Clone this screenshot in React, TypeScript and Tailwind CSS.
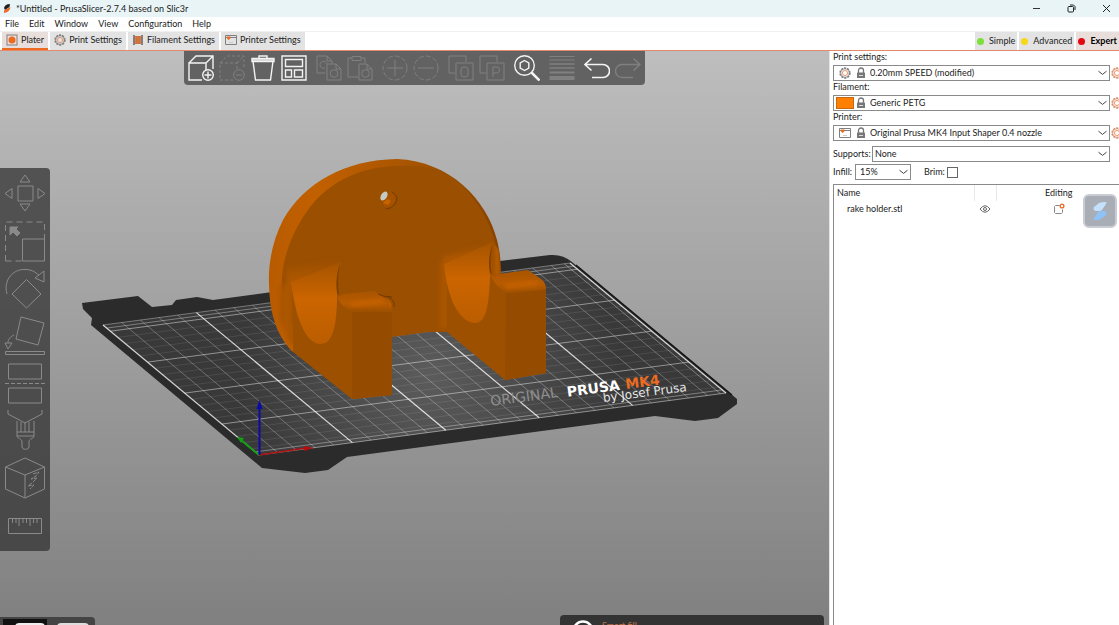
import React, { useState } from 'react'

const TABS = ['Plater', 'Print Settings', 'Filament Settings', 'Printer Settings']
const MENUS = ['File', 'Edit', 'Window', 'View', 'Configuration', 'Help']
const MODES = [
    { name: 'Simple', dot: 'bg-[#7be03a]' },
    { name: 'Advanced', dot: 'bg-[#f7d716]' },
    { name: 'Expert', dot: 'bg-[#e30613]' },
]

function CogIcon({ ring = '#808080' }: { ring?: string }) {
    return (
        <svg width="12" height="12" viewBox="0 0 16 16" fill="none">
            <circle cx="8" cy="8" r="6.500" stroke={ring} strokeWidth="2.200" strokeDasharray="2.800 1.280" />
            <circle cx="8" cy="8" r="5.600" stroke={ring} strokeWidth="1" />
            <circle cx="8" cy="8" r="3.400" stroke="#ed8b5b" strokeWidth="1.200" />
        </svg>
    )
}

function PlaterIcon() {
    return (
        <svg width="12" height="12" viewBox="0 0 12 12" fill="none">
            <rect x="1" y="1" width="10" height="10" stroke="#808080" />
            <circle cx="6" cy="6" r="3.500" fill="#ed6b21" />
        </svg>
    )
}

function SpoolIcon() {
    return (
        <svg width="12" height="12" viewBox="0 0 12 12">
            <path d="M1 1h2v10H1zM9 1h2v10H9z" fill="#808080" />
            <path d="M3 2h6v8H3z" fill="#e0763a" />
            <path d="M4.500 2v8M6 2v8M7.500 2v8" stroke="#b96b43" strokeWidth=".5" />
        </svg>
    )
}

function PrinterIcon() {
    return (
        <svg width="12" height="12" viewBox="0 0 12 12" fill="none">
            <path d="M.5 1.500h11v9H.5zM.5 3.500h11" stroke="#808080" />
            <path d="M2 2.500h3.400v2L3.700 6 2 4.500z" fill="#ed6b21" />
            <path d="M4 8.500h4" stroke="#ccc" />
        </svg>
    )
}

function LockIcon() {
    return (
        <svg width="10" height="12" viewBox="0 0 10 12" fill="none">
            <path d="M2.500 6V3.300a2.500 2.300 0 0 1 5 0V6" stroke="#777" strokeWidth="1.300" />
            <rect x="1" y="5.500" width="8" height="5.500" rx=".6" fill="#777" />
            <path d="M3 8.500h4" stroke="#ddd" />
        </svg>
    )
}

function Chevron() {
    return (
        <svg className="pointer-events-none absolute right-[3px]" width="9" height="6" viewBox="0 0 9 6" fill="none">
            <path d="M.5 1.200l4 3.200 4-3.200" stroke="#444" strokeWidth="1" />
        </svg>
    )
}

const TAB_ICONS = [<PlaterIcon />, <CogIcon />, <SpoolIcon />, <PrinterIcon />]

function Tool({ label, off, children }: { label: string, off?: boolean, children: React.ReactNode }) {
    return (
        <button type="button" aria-label={label} className={off ? 'text-[#808080]' : 'text-[#f4f4f4]'}>
            <svg width="26" height="26" viewBox="0 0 26 26" fill="none" stroke="currentColor" strokeWidth={off ? 1 : 1.400}>
                {children}
            </svg>
        </button>
    )
}

function TopToolbar() {
    return (
        <div className="flex gap-[9px] rounded-b-sm bg-[#626262] px-1 py-1">
            <div className="flex gap-[5px]">
                <Tool label="Add">
                    <path d="M14 25H1V8h17v7M1 8l7-7h17v13M18 8l7-7" />
                    <circle cx="20" cy="20" r="5.300" />
                    <path d="M16.500 20h7M20 16.500v7" />
                </Tool>
                <Tool label="Delete" off>
                    <path d="M14 25H1V8h17v7M1 8l7-7h17v13M18 8l7-7" strokeDasharray="3 2" />
                    <circle cx="20" cy="20" r="5.300" />
                    <path d="M17 20h6" />
                </Tool>
                <Tool label="Delete all">
                    <path d="M3 6l2.500 19h15L23 6" />
                    <path d="M2 3.500h22v3H2z" fill="#d5d5d5" />
                    <path d="M9 3V1h8v2" />
                </Tool>
                <Tool label="Arrange">
                    <path d="M1 1h24v24H1zM4.500 4.500h17v7h-17zM4.500 15h6v7h-6zM13.500 15h8v7h-8z" />
                </Tool>
            </div>
            <div className="flex gap-[5px]">
                <Tool label="Copy" off>
                    <path d="M9 18H1V1h10l5 5v3M11 1v5h5M11 9h9l5 5v11H11zM20 9v5h5" />
                    <circle cx="18" cy="18.500" r="3.800" />
                    <path d="M9 13a3.500 3.500 0 1 1 2-4" />
                </Tool>
                <Tool label="Paste" off>
                    <path d="M11 22H1V3h4M14 3h4v5M5 1.500h9v4H5zM12 9h8l5 5v11H12zM20 9v5h5" />
                    <circle cx="18.500" cy="18.500" r="3.800" />
                </Tool>
            </div>
            <div className="flex gap-[5px]">
                <Tool label="Add instance" off>
                    <circle cx="13" cy="13" r="12" strokeDasharray="5 2" />
                    <path d="M5 13h16M13 5v16" />
                </Tool>
                <Tool label="Remove instance" off>
                    <circle cx="13" cy="13" r="12" strokeDasharray="5 2" />
                    <path d="M5 13h16" />
                </Tool>
            </div>
            <div className="flex gap-[5px]">
                <Tool label="Split to objects" off>
                    <path d="M7 18H1V1h17v6M8 8h17v17H8z" />
                    <rect x="13" y="12" width="7" height="10" rx="3" />
                </Tool>
                <Tool label="Split to parts" off>
                    <path d="M7 18H1V1h17v6M8 8h17v17H8zM14 22V12h3.500a3 3 0 0 1 0 6H14" />
                </Tool>
            </div>
            <Tool label="Search">
                <circle cx="10.500" cy="10.500" r="9.800" />
                <path d="M10.500 5.500l4.300 2.500v5l-4.300 2.500L6.200 13V8z" />
                <path d="M17.500 17.500l8 8" strokeWidth="2.500" />
            </Tool>
            <Tool label="Variable layer height" off>
                <path d="M.5 1.500h25M.5 5h25" strokeWidth="1" />
                <path d="M.5 9h25M.5 13h25" strokeWidth="1.500" />
                <path d="M.5 17.500h25" strokeWidth="2" />
                <path d="M.5 23h25" strokeWidth="4" />
            </Tool>
            <div className="flex gap-[5px]">
                <Tool label="Undo">
                    <path d="M7.500 3.500L1 9.500l6.500 6M1 9.500h18a6.500 6.500 0 0 1 0 13H8" strokeWidth="1.600" />
                </Tool>
                <Tool label="Redo" off>
                    <path d="M18.500 3.500L25 9.500l-6.500 6M25 9.500H7a6.500 6.500 0 0 0 0 13h11" strokeWidth="1.300" />
                </Tool>
            </div>
        </div>
    )
}

const GIZMOS = [
    { name: 'Move', d: 'M13 11h15v15H13zM20 0l5 7H15zM20 36l5-7H15zM0 18.500l7-5v10zM40 18.500l-7-5v10z' },
    { name: 'Scale', d: 'M17.500 17h22v22h-22z' },
    { name: 'Rotate', d: 'M21.500 10.500l14.500 14.500-14.500 14L7 25zM2 25C-2 11 8 0 20 .500c6 0 10 2 14 6M39 2v11l-9-4z' },
    { name: 'Place on face', d: 'M16 1l23 6-6 22-22-6zM9 19c-4 2-6 4-6 8M0 27h7l-4 6zM.5 35.500h39v3H.5z' },
    { name: 'Cut', d: 'M3.500 1h33v15h-33zM3.500 25h33v15h-33z' },
    { name: 'Paint-on supports', d: 'M3 0v4l17 9 17-9V0M12 11v15h17V11M16 12v10M20 12v10M24 12v10M12 22h17M12 26c0 3 5 2 5 6v5c0 3 7 3 7 0v-5c0-4 5-3 5-6' },
    { name: 'Seam painting', d: 'M20 1l19.500 9v22L20 41 .5 32V10zM.5 10L20 18l19.500-8M20 18v23' },
    { name: 'Measure', d: 'M3.500 14.500h33v15h-33zM7.500 15v4M11 15v4M14 15v7M18 15v4M21.500 15v4M25 15v7M28.500 15v4M32 15v4' },
]

function GizmoBar() {
    return (
        <div className="flex flex-col gap-[7px] rounded-r-sm bg-[#333]/75 px-[5px] py-[7px]">
            {GIZMOS.map((gizmo) => (
                <button key={gizmo.name} type="button" aria-label={gizmo.name} className="text-[#8a8a8a]">
                    <svg width="40" height="40" viewBox="0 0 40 40" fill="none" stroke="currentColor" className="overflow-visible">
                        <path d={gizmo.d} />
                        {gizmo.name === 'Scale' && <>
                            <path d="M.5 39V0h39V17M.5 39H17" strokeDasharray="6 4" />
                            <path d="M5 5h8l-2 2 4 4-3 3-4-4-3 3z" fill="currentColor" />
                        </>}
                        {gizmo.name === 'Cut' && <path d="M0 20.500h40" strokeDasharray="4 2" />}
                        {gizmo.name === 'Seam painting' && <path d="M28 17l6-2-3 4-5 3 6-1-5 5-4 3 6-1-4 4" strokeDasharray="4 1" />}
                    </svg>
                </button>
            ))}
        </div>
    )
}

// every 10 mm, the bed is 250 x 210 mm
const COLS = Array.from({ length: 26 }, (_, i) => i * 10)
const ROWS = Array.from({ length: 21 }, (_, i) => i * 10)

function Bed() {
    return (
        <g>
            <path fill="#2b2b2b" d="M82 303l56-7 14 11 20-2 4-5 21-3 16 3 287-39 50-6q13-1 22 7l165 137v5l-19 14-23 3-40-5-308 41-19 13-23 3-43-5L91 325l1-7-9-9z" />
            <path fill="url(#bed)" d="M103 325l468-62 155 130-467 62z" />
            <g transform="matrix(1.868 -.248 -.743 -.619 259 455)">
                {ROWS.map((y) => (
                    <path key={y} d={`M0 ${y}H250`} stroke="#fff" vectorEffect="non-scaling-stroke"
                        strokeOpacity={y % 50 === 0 ? 0.45 : 0.09} strokeWidth="1" />
                ))}
                {COLS.map((x) => (
                    <path key={x} d={`M${x} 0V210`} stroke="#fff" vectorEffect="non-scaling-stroke"
                        strokeOpacity={x % 50 === 0 ? 0.8 : 0.27} strokeWidth={x % 50 === 0 ? 1.200 : 1} />
                ))}
                <path d="M0 210H250M0 205H250M0 5H250M247 0V210" stroke="#fff" strokeOpacity=".35" vectorEffect="non-scaling-stroke" />
            </g>
            <path d="M576 265l156 130" stroke="#111" strokeWidth="1.200" />
            <g transform="rotate(-7.600 491 406)" fontFamily="DejaVu Sans" fontSize="14">
                <text x="491" y="406" fill="#8f8f8f">ORIGINAL</text>
                <text x="568" y="407" fill="#fff" fontWeight="bold">PRUSA</text>
                <text x="627" y="407" fill="#ed6b21" fontWeight="bold">MK4</text>
                <text x="603" y="417" fill="#e6e6e6" fontSize="12">by Josef Prusa</text>
            </g>
        </g>
    )
}

function Model() {
    return (
        <g>
            <path fill="url(#rim)" d="M269 285C268 262 273 240 283 220C305 182 345 160 397 159C450 161 487 200 497 240C500 252 501 262 501 275L480 332H300L293 352C281 340 270 322 269 285z" />
            <path fill="#9b4f00" d="M282 290C280 262 292 228 315 201C340 175 370 166 400 166C420 165 436 168 450 176C478 195 500 235 500 275L475 330L447 332L435 331L392 337L380 350H300z" />
            <g filter="url(#soft)">
                <path fill="url(#blendL)" d="M287 268l52-8-5 40-47 22z" />
                <path fill="url(#blendR)" d="M443 256l48-13 2 40-50 26z" />
                <path fill="url(#fillet)" d="M281 285h12v62q-10-14-13-30z" />
                <path fill="url(#sideV)" d="M438 262h11v67l-11-1z" />
            </g>
            <path fill="#9d5000" d="M292 283l45 10h28l27 18v84l-40 4-59-47z" />
            <path fill="#9d5000" d="M447 262l45 15h36l14 5q4 3 4 8v83l-41 7-58-48z" />
            <path fill="#964c00" d="M352 312h40v83l-40 4zM506 293l40-3v83l-41 7z" />
            <path fill="url(#scoop)" d="M291 282L341 262Q335 275 337 290Q338 344 321 344C306 344 296 320 291 282z" />
            <path fill="url(#scoop)" d="M444 264L493 242Q488 259 490 276C489 310 485 323 475 323C458 322 447 296 444 264z" />
            <path fill="#7e4000" d="M340 264q-5 14-3 29l2 2q-2-17 1-31zM493 243q-6 15-3 30l2 2q-3-15 1-32z" />
            <path fill="url(#sideR)" d="M493 243l6 7 2 24-8 1q-3-14 0-32z" />
            <path fill="url(#peg)" d="M337 297l8-3 28-3q6 2 14 9 5 3 5 11l-36 1-6-1q-9-5-13-14z" />
            <path fill="url(#peg)" d="M491 277l8-3 29-4 10 7q8 4 8 12l-34 4-7-1q-9-6-14-15z" />
            <g filter="url(#soft)">
                <path d="M351 305l32-4M505 287l32-4" stroke="#c86300" strokeWidth="4" />
            </g>
            <path d="M378 294q5 3 14 3" stroke="#6f3900" fill="none" />
            <path d="M388 297q7 3 6 10" stroke="#743a00" fill="none" />
            <path d="M387 299q5 3 4 8" stroke="#c36000" fill="none" />
            <ellipse cx="389" cy="200" rx="6" ry="8" fill="#a45200" transform="rotate(25 389 200)" />
            <path d="M392 192q8 5 3 12-4 5-9 5" stroke="#743a00" fill="none" />
            <ellipse cx="384" cy="196" rx="3" ry="5" fill="#c4cbc4" transform="rotate(30 384 196)" />
            <path d="M387 199l4 2-3 4-5-2z" fill="#c86300" />
        </g>
    )
}

function Scene() {
    return (
        <svg className="absolute inset-0 h-full w-full" viewBox="0 51 829 574" preserveAspectRatio="xMidYMid slice" role="img" aria-label="3D view">
            <defs>
                <filter id="soft"><feGaussianBlur stdDeviation="2" /></filter>
                <radialGradient id="bed" gradientUnits="userSpaceOnUse" cx="430" cy="375" r="190">
                    <stop offset="0" stopColor="#5c5c5c" />
                    <stop offset="1" stopColor="#393939" />
                </radialGradient>
                <linearGradient id="rim" x1="0" y1="0" x2="1" y2="0">
                    <stop offset="0" stopColor="#b85b00" />
                    <stop offset=".2" stopColor="#c26000" />
                    <stop offset=".6" stopColor="#a85500" />
                    <stop offset="1" stopColor="#864300" />
                </linearGradient>
                <linearGradient id="fillet" x1="0" y1="0" x2="1" y2="0">
                    <stop offset="0" stopColor="#9b4f00" />
                    <stop offset=".5" stopColor="#b35900" />
                    <stop offset="1" stopColor="#9d5000" />
                </linearGradient>
                <linearGradient id="sideR" x1="0" y1="0" x2="1" y2="0">
                    <stop offset="0" stopColor="#9b4f00" />
                    <stop offset=".6" stopColor="#b45a00" />
                    <stop offset="1" stopColor="#9d5000" />
                </linearGradient>
                <linearGradient id="sideV" x1="0" y1="0" x2="1" y2="0">
                    <stop offset="0" stopColor="#9b4f00" />
                    <stop offset=".5" stopColor="#ae5700" />
                    <stop offset="1" stopColor="#9d5000" />
                </linearGradient>
                <linearGradient id="blendL" x1="0" y1="0" x2="0" y2="1">
                    <stop offset="0" stopColor="#9b4f00" />
                    <stop offset=".5" stopColor="#b85b00" />
                    <stop offset="1" stopColor="#a85400" />
                </linearGradient>
                <linearGradient id="blendR" x1="0" y1="0" x2="0" y2="1">
                    <stop offset="0" stopColor="#9b4f00" />
                    <stop offset=".4" stopColor="#b85b00" />
                    <stop offset="1" stopColor="#9d5000" />
                </linearGradient>
                <linearGradient id="scoop" x1="0" y1="0" x2="0" y2="1">
                    <stop offset="0" stopColor="#a55300" />
                    <stop offset=".45" stopColor="#cb6500" />
                    <stop offset="1" stopColor="#bb5d00" />
                </linearGradient>
                <linearGradient id="peg" x1="0" y1="0" x2="0" y2="1">
                    <stop offset="0" stopColor="#a85400" />
                    <stop offset=".6" stopColor="#b85b00" />
                    <stop offset="1" stopColor="#9b4f00" />
                </linearGradient>
            </defs>
            <Bed />
            <Model />
            <path d="M259 455l47-7" stroke="#b01010" strokeWidth="1.500" />
            <path d="M304 446l10 2-10 3z" fill="#b01010" />
            <path d="M259 455l-18-15" stroke="#12a012" strokeWidth="1.800" />
            <path d="M237 437l7 1-3 5z" fill="#12a012" />
            <path d="M259.500 455v-48" stroke="#0a0aa8" strokeWidth="2" />
            <path d="M259.500 400l3 9h-6z" fill="#0a0aa8" />
        </svg>
    )
}

function PresetRow({ id, label, value, icon }: { id: string, label: string, value: string, icon: React.ReactNode }) {
    return (
        <div>
            <label htmlFor={id} className="block h-[14px]">{label}</label>
            <div className="flex items-center gap-px">
                <div className="relative flex w-[277px] shrink-0 items-center">
                    <select id={id} className="h-4 w-full appearance-none border border-[#8a8a8a] bg-white pl-[36px] leading-[14px]">
                        <option>{value}</option>
                    </select>
                    <span className="pointer-events-none absolute left-[2px] flex w-[31px] items-center justify-between">
                        <span className="flex w-[19px] justify-center">{icon}</span>
                        <LockIcon />
                    </span>
                    <Chevron />
                </div>
                <button type="button" aria-label={'Edit ' + label} className="shrink-0"><CogIcon ring="#d8936f" /></button>
            </div>
        </div>
    )
}

function Sidebar() {
    const [brim, setBrim] = useState(false)

    return (
        <aside className="relative flex w-[290px] shrink-0 flex-col overflow-hidden border-l border-[#e4e4e4] bg-white pl-[3px]">
            <PresetRow id="print" label="Print settings:" value="0.20mm SPEED (modified)" icon={<CogIcon />} />
            <PresetRow id="filament" label="Filament:" value="Generic PETG"
                icon={<span className="h-3 w-[18px] border border-[#c56a10] bg-[#ff8000]" />} />
            <PresetRow id="printer" label="Printer:" value="Original Prusa MK4 Input Shaper 0.4 nozzle" icon={<PrinterIcon />} />
            <div className="mt-[5px] flex w-[277px] items-center justify-between">
                <label htmlFor="supports">Supports:</label>
                <div className="relative flex w-[238px] items-center">
                    <select id="supports" className="h-4 w-full appearance-none border border-[#8a8a8a] bg-white pl-[2px] leading-[14px]">
                        <option>None</option>
                    </select>
                    <Chevron />
                </div>
            </div>
            <div className="mt-[2px] flex items-center">
                <label htmlFor="infill" className="w-[22px]">Infill:</label>
                <div className="relative flex w-[56px] items-center">
                    <select id="infill" className="h-4 w-full appearance-none border border-[#8a8a8a] bg-white pl-1 leading-[14px]">
                        <option>15%</option>
                    </select>
                    <Chevron />
                </div>
                <label htmlFor="brim" className="ml-[13px] w-[23px]">Brim:</label>
                <input id="brim" type="checkbox" checked={brim} onChange={() => setBrim(!brim)}
                    className="h-[11px] w-[11px] appearance-none border border-[#666] bg-white checked:bg-[#ed6b21]" />
            </div>
            <div className="mt-1 grow border-l border-t border-[#8a8a8a]">
                <table className="w-full table-fixed border-collapse text-left">
                    <thead>
                        <tr className="h-4">
                            <th className="w-[140px] pl-[3px] font-normal">Name</th>
                            <th className="w-[22px] border-x border-[#e8e8e8]" aria-label="Visible" />
                            <th className="pl-[2px] text-center font-normal">Editing</th>
                        </tr>
                    </thead>
                    <tbody>
                        <tr className="h-4">
                            <td className="pl-[13px]">rake holder.stl</td>
                            <td>
                                <svg className="mx-auto" width="12" height="10" viewBox="0 0 12 10" fill="none" stroke="#666">
                                    <path d="M1 5q5-6.500 10 0-5 6.500-10 0z" />
                                    <circle cx="6" cy="5" r="1.500" />
                                </svg>
                            </td>
                            <td className="pl-[2px]">
                                <svg className="mx-auto" width="12" height="12" viewBox="0 0 12 12" fill="none">
                                    <path d="M6.500 2.500h-4l-1 1v6l1 1h6l1-1V6.500" stroke="#888" />
                                    <circle cx="9" cy="3" r="1.900" stroke="#ed6b21" strokeWidth="1.300" />
                                </svg>
                            </td>
                        </tr>
                    </tbody>
                </table>
            </div>
            <button type="button" aria-label="Assistant"
                className="absolute right-[2px] top-[143px] flex h-[34px] w-[34px] items-center justify-center rounded-md border-2 border-[#c9ccd3] bg-[#a9adb6]">
                <svg width="20" height="22" viewBox="0 0 20 22">
                    <path d="M4 10q-1-1 0-3l5-4q2-1 7-1 1 0 0 2l-4 6q-1 1-3 1H6q-1 0-2-1z" fill="#c4e0fa" />
                    <path d="M16 12q1 1 0 3l-5 4q-2 1-7 1-1 0 0-2l4-6q1-1 3-1h3q1 0 2 1z" fill="#8fc3f5" />
                </svg>
            </button>
        </aside>
    )
}

function App() {
    const [tab, setTab] = useState('Plater')

    return (
        <div className="flex h-screen flex-col overflow-hidden bg-white font-[Lato,'Noto_Sans',sans-serif] text-[9px] leading-[12px] text-[#222]">
            <header className="flex h-[17px] shrink-0 items-center justify-between bg-[#e8f4f6] pl-[3px] pr-2">
                <div className="flex items-center gap-[5px]">
                    <svg width="8" height="9" viewBox="0 0 8 9">
                        <path d="M1 4Q2 0 7 0l-.5 3L2 6z" fill="#222" />
                        <path d="M7.500 3Q7 8 1 9V6.500z" fill="#ed6b21" />
                    </svg>
                    <h1>*Untitled - PrusaSlicer-2.7.4 based on Slic3r</h1>
                </div>
                <div className="flex gap-[26px]">
                    <button type="button" aria-label="Minimize">
                        <svg width="9" height="9" viewBox="0 0 9 9"><path d="M1 4.500h7" stroke="#333" /></svg>
                    </button>
                    <button type="button" aria-label="Restore">
                        <svg width="9" height="9" viewBox="0 0 9 9" fill="none" stroke="#222">
                            <rect x="1" y="2.500" width="5.500" height="5.500" rx="1" />
                            <path d="M3 1h3.500L8 2.500V6" />
                        </svg>
                    </button>
                    <button type="button" aria-label="Close">
                        <svg width="9" height="9" viewBox="0 0 9 9"><path d="M1 1l7 7M8 1L1 8" stroke="#222" /></svg>
                    </button>
                </div>
            </header>
            <nav className="flex h-[15px] shrink-0 items-center gap-[10px] border-b border-[#f0f0f0] px-[5px]">
                {MENUS.map((menu) => <button key={menu} type="button">{menu}</button>)}
            </nav>
            <div className="flex h-[19px] shrink-0 justify-between border-b border-[#e58a68] pl-[2px]">
                <div className="flex gap-[2px]">
                    {TABS.map((name, i) => (
                        <button key={name} type="button" onClick={() => setTab(name)}
                            className={`flex items-center gap-[3px] border-b-2 px-1 ${name === tab ? 'border-[#ed6b21] bg-[#e8dedb]' : 'border-[#e3e3e3] bg-[#e3e3e3]'}`}>
                            {TAB_ICONS[i]}
                            {name}
                        </button>
                    ))}
                </div>
                <div className="flex w-[144px] gap-[2px]">
                    {MODES.map((mode) => (
                        <button key={mode.name} type="button"
                            className={`flex shrink-0 items-center gap-[5px] px-[2px] ${mode.name === 'Expert' ? 'bg-[#e8dedb] font-bold text-black' : 'bg-[#e3e3e3]'}`}>
                            <span className={`h-[7px] w-[7px] rounded-full ${mode.dot}`} />
                            {mode.name}
                        </button>
                    ))}
                </div>
            </div>
            <div className="flex min-h-0 grow">
                <main className="relative grow overflow-hidden bg-linear-to-b from-[#bebebe] to-[#808080]">
                    <Scene />
                    <div className="absolute inset-x-0 top-0 flex justify-center"><TopToolbar /></div>
                    <div className="absolute left-0 top-[117px]"><GizmoBar /></div>
                    <div className="absolute bottom-0 left-0 flex h-2 w-[95px] gap-[10px] overflow-hidden rounded-tr-sm bg-[#444] pl-[3px] pt-[2px]">
                        <button type="button" aria-label="3D editor view" className="h-5 w-11 bg-[#111] pl-3 pr-[2px] pt-[3px]">
                            <span className="block h-4 rounded-t-sm border-2 border-[#eee]" />
                        </button>
                        <button type="button" aria-label="Preview" className="h-5 w-8 pt-[3px]">
                            <span className="block h-4 rounded-t-sm border-2 border-[#ddd]" />
                        </button>
                    </div>
                    <div className="absolute bottom-0 right-[5px] flex h-[10px] w-[264px] gap-2 overflow-hidden rounded-t-sm bg-[#333] pl-3">
                        <svg className="shrink-0" width="22" height="22" viewBox="0 0 22 22" fill="none">
                            <circle cx="11" cy="16" r="9.500" stroke="#fff" strokeWidth="2.500" />
                        </svg>
                        <span className="pt-[5px] text-[#c9744a]">Smart fill</span>
                    </div>
                </main>
                <Sidebar />
            </div>
        </div>
    )
}

export default App
